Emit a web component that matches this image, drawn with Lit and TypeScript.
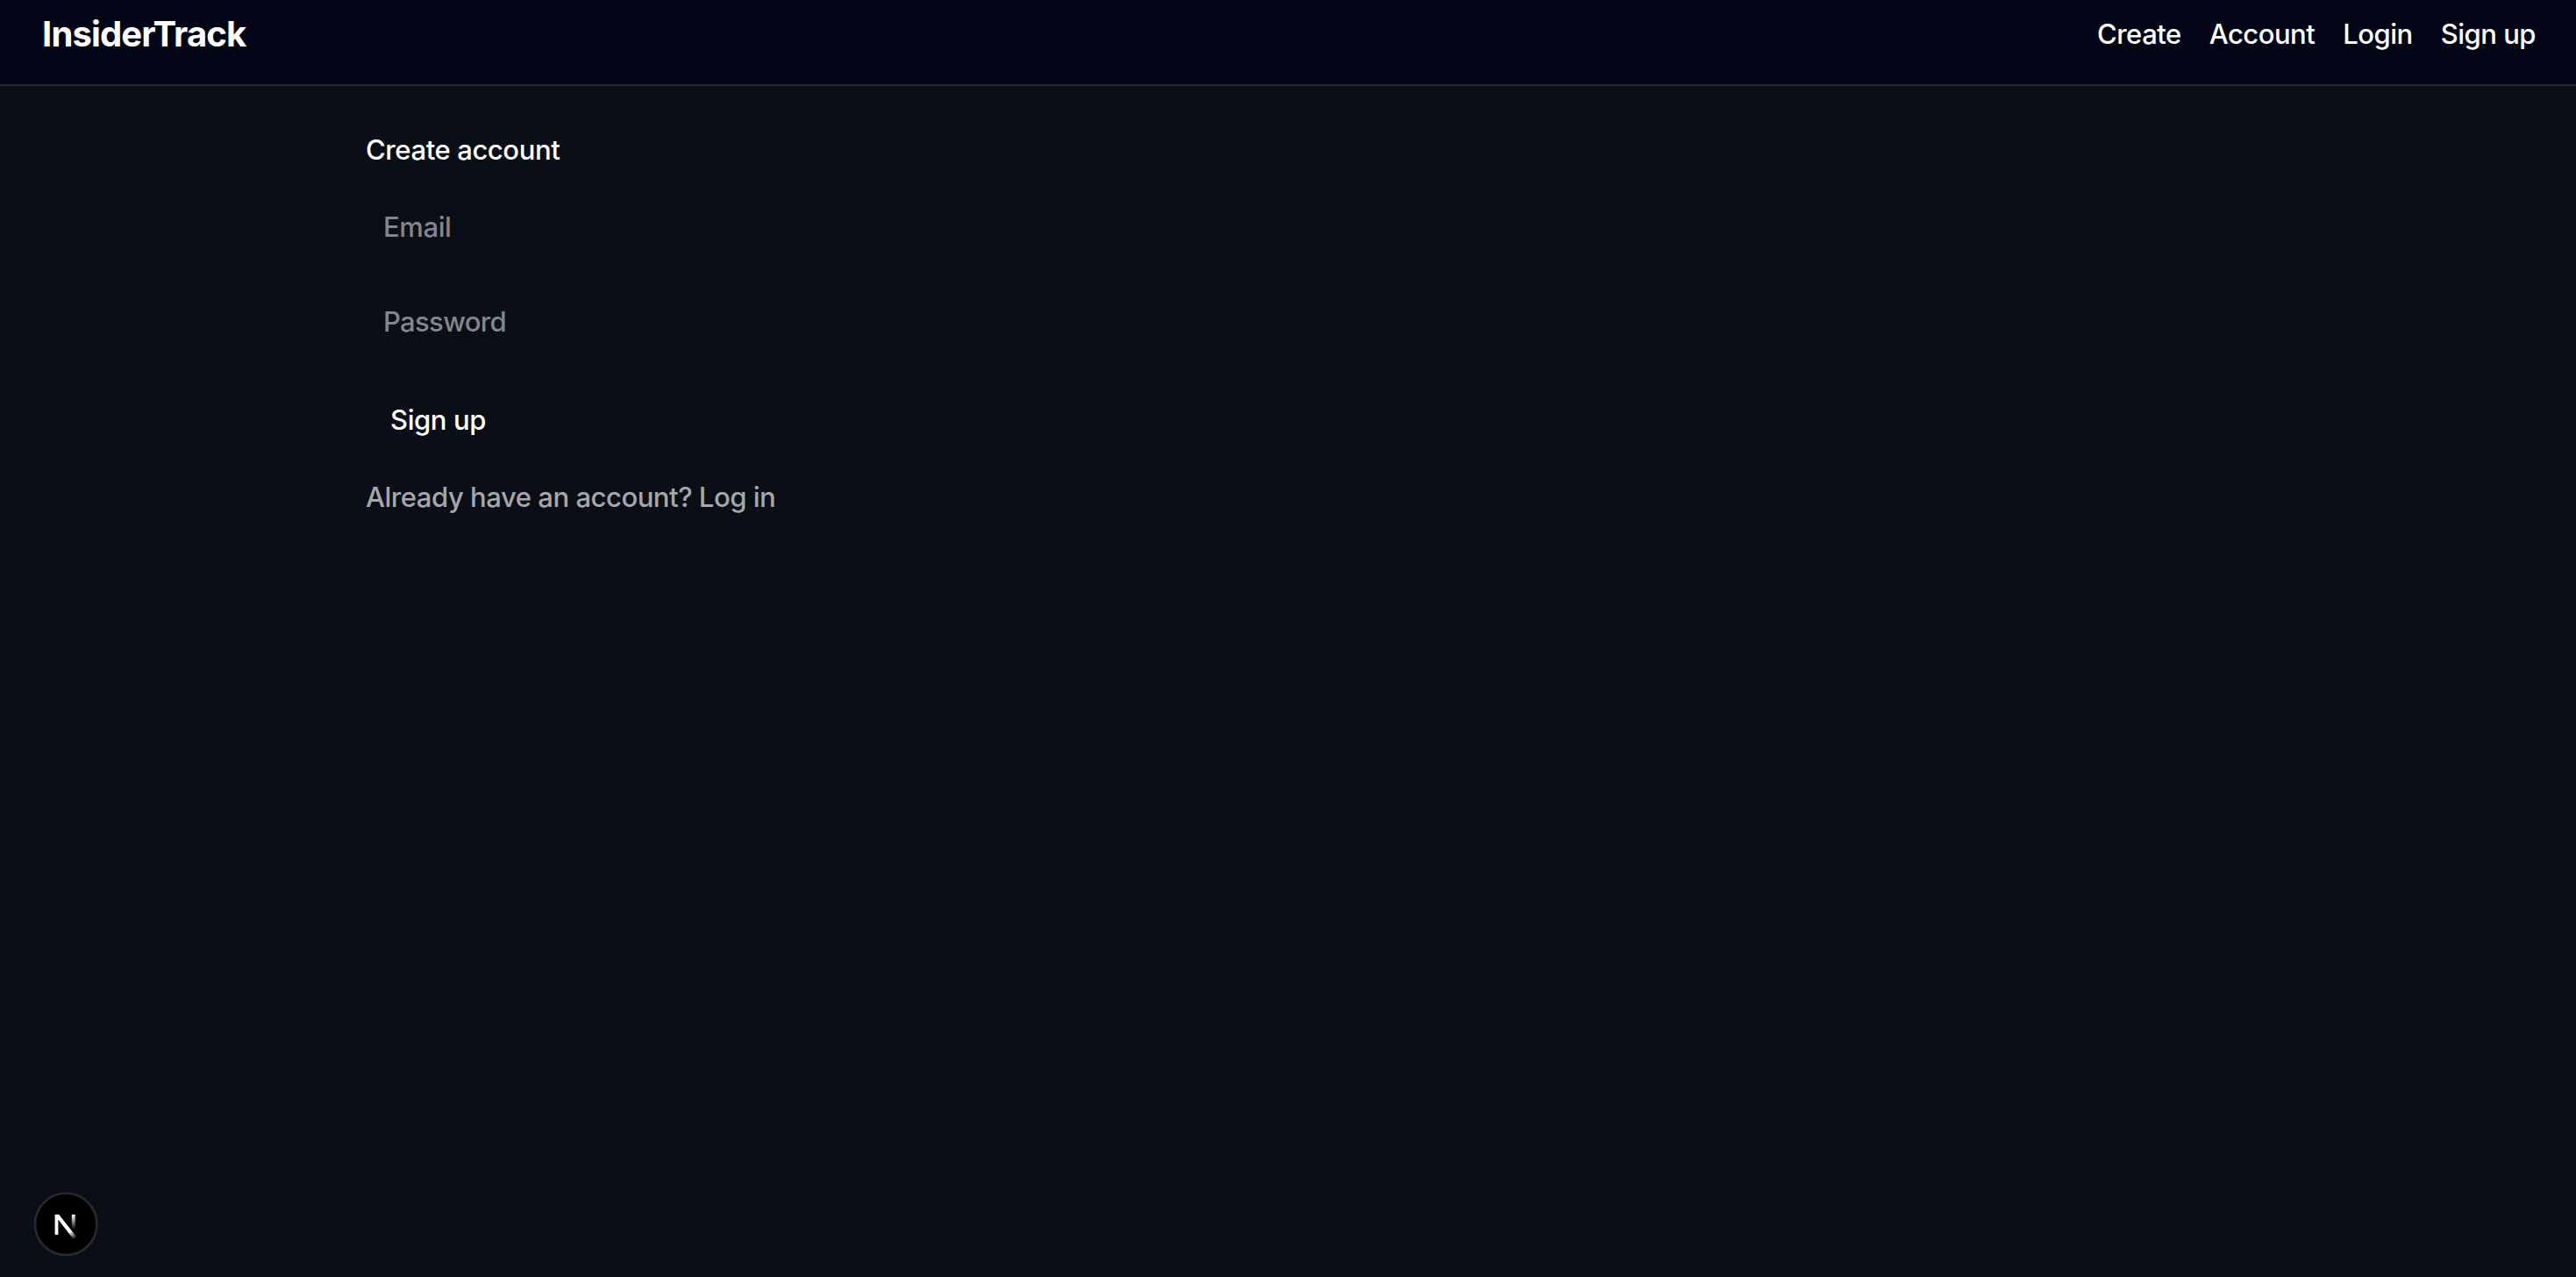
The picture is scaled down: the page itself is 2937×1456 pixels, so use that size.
import { LitElement, html, css } from "lit";
import { customElement } from "lit/decorators.js";

@customElement("site-header")
class SiteHeader extends LitElement {
  static styles = css`
    :host { display: block; }
    .bar {
      display: flex; justify-content: space-between; align-items: flex-start;
      height: 96px; padding: 0 46px 0 48px; background: #020515;
      border-bottom: 2px solid #242831; color: #fff;
    }
    .brand { font-size: 40px; font-weight: 700; line-height: 48px; letter-spacing: -0.85px; padding-top: 15px; }
    .links { display: flex; gap: 32px; padding-top: 15px; line-height: 48px; letter-spacing: -0.5px; }
    a { color: inherit; text-decoration: none; }
  `;
  render() {
    return html`<header class="bar">
      <a class="brand" href="#">InsiderTrack</a>
      <nav class="links">
        ${["Create", "Account", "Login", "Sign up"].map((t) => html`<a href="#">${t}</a>`)}
      </nav>
    </header>`;
  }
}

@customElement("signup-form")
class SignupForm extends LitElement {
  static styles = css`
    :host { display: block; }
    .form { display: flex; flex-direction: column; align-items: flex-start; padding: 49px 417px 0; }
    .title { margin: 0 0 23px; font-size: inherit; font-weight: inherit; line-height: 48px; color: #fff; }
    .field {
      box-sizing: border-box; width: 100%; height: 80px; margin: 0 0 28px; padding: 16px 20px;
      border: 0; outline: 0; background: none; color: #fff;
      font: inherit; letter-spacing: inherit; line-height: 48px;
    }
    .secret { letter-spacing: -0.65px; }
    .field::placeholder { color: #83868c; opacity: 1; }
    .submit {
      padding: 21px 28px 20px; border: 0; background: none; color: #fff;
      font: inherit; letter-spacing: inherit; line-height: 48px;
    }
    .hint { margin: 20px 0 0; line-height: 48px; letter-spacing: -0.46px; color: #a5a7aa; }
    .hint a { color: inherit; text-decoration: none; }
  `;
  render() {
    return html`<form class="form">
      <h1 class="title">Create account</h1>
      <input class="field" type="email" placeholder="Email" />
      <input class="field secret" type="password" placeholder="Password" />
      <button class="submit" type="button">Sign up</button>
      <p class="hint">Already have an account? <a href="#">Log in</a></p>
    </form>`;
  }
}

@customElement("dev-badge")
class DevBadge extends LitElement {
  static styles = css`
    :host { display: block; }
    svg { display: block; width: 80px; height: 80px; }
  `;
  render() {
    return html`<svg viewBox="0 0 80 80" fill="none">
      <defs>
        <linearGradient id="diag" x1="42" y1="43" x2="51.5" y2="56" gradientUnits="userSpaceOnUse">
          <stop offset="0.35" stop-color="#fff" /><stop offset="1" stop-color="#fff" stop-opacity="0" />
        </linearGradient>
        <linearGradient id="stem" x1="0" y1="29" x2="0" y2="46" gradientUnits="userSpaceOnUse">
          <stop stop-color="#fff" /><stop offset="1" stop-color="#fff" stop-opacity="0" />
        </linearGradient>
      </defs>
      <circle cx="40.2" cy="39.7" r="35.2" fill="#000" stroke="#2a2a2b" stroke-width="2.6" />
      <path d="M27.6 51.8V28.8H32.2L52.4 54.6L48.8 57L31.4 34.6V51.8Z" fill="url(#diag)" />
      <rect x="46.8" y="28.8" width="3.9" height="17" fill="url(#stem)" />
    </svg>`;
  }
}

@customElement("app-root")
class AppRoot extends LitElement {
  static styles = css`
    :host {
      display: block; position: relative; box-sizing: border-box; height: 1456px; overflow: hidden;
      background: #0a0f17; font-family: Inter, "Liberation Sans", sans-serif;
      font-size: 31px; font-weight: 450; letter-spacing: -0.4px;
    }
    .badge { position: absolute; left: 35px; bottom: 20px; }
  `;
  render() {
    return html`<site-header></site-header>
      <main><signup-form></signup-form></main>
      <dev-badge class="badge"></dev-badge>`;
  }
}
